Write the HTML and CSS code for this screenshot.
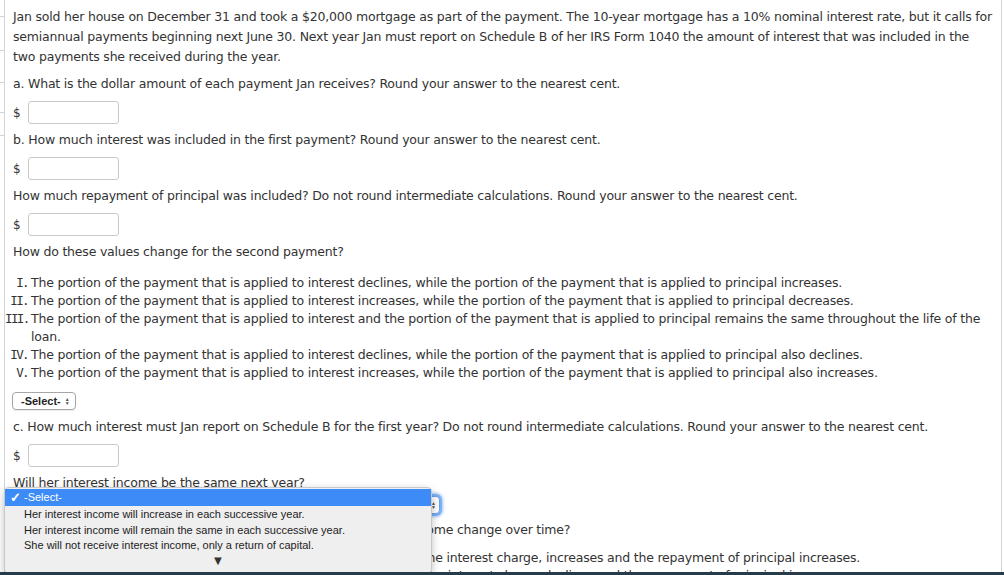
FILE: index.html
```html
<!DOCTYPE html>
<html>
<head>
<meta charset="utf-8">
<link rel="stylesheet" href="styles.css">
</head>
<body>
<div class="page">
  <div class="gutter">
    <div class="tick t1"></div>
    <div class="tick t2"></div>
    <div class="tick t3"></div>
    <div class="tick t4"></div>
    <div class="tick t5"></div>
  </div>
  <div class="panel">
    <p class="intro">Jan sold her house on December 31 and took a $20,000 mortgage as part of the payment. The 10-year mortgage has a 10% nominal interest rate, but it calls for semiannual payments beginning next June 30. Next year Jan must report on Schedule B of her IRS Form 1040 the amount of interest that was included in the two payments she received during the year.</p>

    <p class="q">a. What is the dollar amount of each payment Jan receives? Round your answer to the nearest cent.</p>
    <div class="answer"><span class="dollar">$</span><span class="input"></span></div>

    <p class="q">b. How much interest was included in the first payment? Round your answer to the nearest cent.</p>
    <div class="answer"><span class="dollar">$</span><span class="input"></span></div>

    <p class="q">How much repayment of principal was included? Do not round intermediate calculations. Round your answer to the nearest cent.</p>
    <div class="answer"><span class="dollar">$</span><span class="input"></span></div>

    <p class="q">How do these values change for the second payment?</p>

    <div class="options">
      <span class="num">I.</span><span>The portion of the payment that is applied to interest declines, while the portion of the payment that is applied to principal increases.</span>
      <span class="num">II.</span><span>The portion of the payment that is applied to interest increases, while the portion of the payment that is applied to principal decreases.</span>
      <span class="num">III.</span><span>The portion of the payment that is applied to interest and the portion of the payment that is applied to principal remains the same throughout the life of the loan.</span>
      <span class="num">IV.</span><span>The portion of the payment that is applied to interest declines, while the portion of the payment that is applied to principal also declines.</span>
      <span class="num">V.</span><span>The portion of the payment that is applied to interest increases, while the portion of the payment that is applied to principal also increases.</span>
    </div>

    <div class="select-row"><span class="select">-Select-<span class="arrows">&#9650;<br>&#9660;</span></span></div>

    <p class="q">c. How much interest must Jan report on Schedule B for the first year? Do not round intermediate calculations. Round your answer to the nearest cent.</p>
    <div class="answer"><span class="dollar">$</span><span class="input"></span></div>

    <p class="q q1">Will her interest income be the same next year?</p>
    <div class="select-row2"><span class="select wide focus"><span class="arrows">&#9650;<br>&#9660;</span></span></div>

    <p class="q q2">If her income is not the same as this year's, how will her interest income change over time?</p>

    <div class="options opt2">
      <span class="num">I.</span><span>As the loan is amortized (paid off), the payment, which includes the interest charge, increases and the repayment of principal increases.</span>
      <span class="num">II.</span><span>As the loan is amortized (paid off), the loan balance declines, so the interest charge declines and the repayment of principal increases.</span>
    </div>

    <div class="menu">
      <div class="mi sel"><span class="check">&#10003;</span>-Select-</div>
      <div class="mi">Her interest income will increase in each successive year.</div>
      <div class="mi">Her interest income will remain the same in each successive year.</div>
      <div class="mi">She will not receive interest income, only a return of capital.</div>
      <div class="more">&#9660;</div>
    </div>
  </div>
</div>
<div class="dock"></div>
</body>
</html>
```
FILE: styles.css
```css
html, body {
  margin: 0;
  padding: 0;
  background: #fff;
  overflow: hidden;
}
body {
  font-family: "DejaVu Sans", Verdana, sans-serif;
  font-size: 12.5px;
  letter-spacing: -0.2px;
  color: #333;
  height: 575px;
}
.page {
  display: flex;
  height: 575px;
}
.gutter {
  width: 4px;
  display: flex;
  flex-direction: column;
}
.tick {
  height: 1px;
  background: #d4d4d4;
}
.t1 { margin-top: 16px; }
.t2 { margin-top: 33px; }
.t3 { margin-top: 31px; }
.t4 { margin-top: 29px; }
.t5 { margin-top: 22px; }
.panel {
  position: relative;
  width: 988px;
  border-left: 1px solid #d4d4d4;
  border-right: 1px solid #d4d4d4;
  padding: 7px 0 0 8px;
}
p { margin: 0; }
.intro { line-height: 20px; width: 981px; }
.q { line-height: 20px; margin-top: 7px; }
.answer {
  display: flex;
  align-items: center;
  margin-top: 7px;
  margin-bottom: -1px;
  height: 23px;
}
.dollar { width: 15px; font-size: 12px; }
.input {
  width: 89px;
  height: 21px;
  border: 1px solid #c9c9c9;
  border-radius: 3px;
  background: #fff;
}
.options {
  display: grid;
  grid-template-columns: 23px 1fr;
  column-gap: 3px;
  line-height: 18px;
  margin-top: 12px;
  margin-left: -8px;
}
.num {
  text-align: right;
  font-family: "DejaVu Sans Mono", monospace;
  letter-spacing: -1.6px;
  white-space: nowrap;
}
.select-row { margin-top: 10px; height: 18px; }
.select {
  display: inline-flex;
  align-items: center;
  gap: 4px;
  height: 16px;
  padding: 0 5px 0 8px;
  border: 1px solid #a6a6a6;
  border-radius: 4px;
  font-family: "Liberation Sans", Arial, sans-serif;
  font-weight: bold;
  font-size: 11px;
  letter-spacing: 0;
  color: #222;
  background: #fff;
  box-shadow: 0 1px 1px rgba(0,0,0,0.08);
  margin-left: -1px;
}
.arrows {
  font-size: 5px;
  line-height: 4px;
  color: #555;
  font-weight: normal;
}
.q1 { margin-top: 7px; }
.select-row2 { margin-top: 0; height: 18px; }
.select.wide {
  width: 420px;
  justify-content: flex-end;
  padding: 0 3px;
}
.select.focus {
  border-color: #6aa3f0;
  box-shadow: 0 0 0 2px #7db0f5, 0 0 3px 3px rgba(70,140,240,0.5);
}
.q2 { margin-top: 9px; }
.opt2 { margin-top: 9px; }
.menu {
  position: absolute;
  left: 0;
  top: 487px;
  width: 426px;
  height: 84px;
  background: #efefef;
  border: 1px solid #c9c9c9;
  border-radius: 5px;
  box-shadow: 0 3px 8px rgba(0,0,0,0.25);
  font-family: "Liberation Sans", Arial, sans-serif;
  font-size: 11px;
  letter-spacing: 0;
  color: #222;
  padding-top: 1px;
  margin-left: -1px;
}
.mi {
  height: 15.5px;
  line-height: 15.5px;
  padding-left: 19px;
  position: relative;
}
.mi.sel {
  background: #3d8bf7;
  color: #fff;
  height: 17px;
  line-height: 17px;
  margin-bottom: 1px;
}
.check {
  position: absolute;
  left: 5px;
  font-size: 13px;
  font-weight: bold;
}
.more {
  text-align: center;
  font-size: 13px;
  color: #333;
  line-height: 14px;
}
.dock {
  position: fixed;
  left: 0;
  right: 0;
  bottom: 0;
  height: 3px;
  background: #283b49;
}
```
